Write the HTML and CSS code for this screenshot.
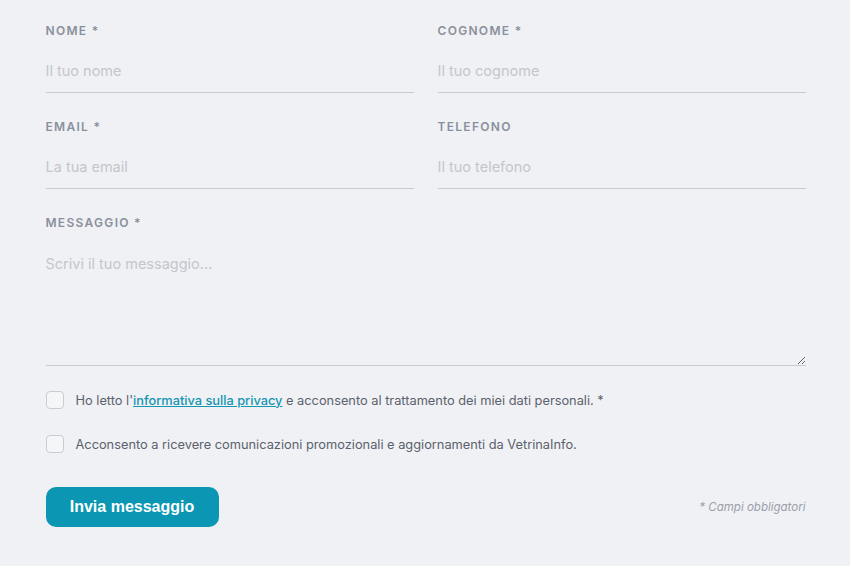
FILE: index.html
```html
<!DOCTYPE html>
<html lang="it">
<head>
  <meta charset="UTF-8" />
  <meta name="viewport" content="width=device-width, initial-scale=1.0" />
  <title>Contatti</title>
  <link rel="stylesheet" href="styles.css">
</head>
<body>
  <form class="contact-form">
    <div class="row">
      <div class="field">
        <label for="nome">Nome *</label>
        <input type="text" id="nome" placeholder="Il tuo nome">
      </div>
      <div class="field">
        <label for="cognome">Cognome *</label>
        <input type="text" id="cognome" placeholder="Il tuo cognome">
      </div>
    </div>

    <div class="row">
      <div class="field">
        <label for="email">Email *</label>
        <input type="email" id="email" placeholder="La tua email">
      </div>
      <div class="field">
        <label for="telefono">Telefono</label>
        <input type="tel" id="telefono" placeholder="Il tuo telefono">
      </div>
    </div>

    <div class="field">
      <label for="messaggio">Messaggio *</label>
      <textarea id="messaggio" placeholder="Scrivi il tuo messaggio..."></textarea>
    </div>

    <div class="checks">
      <label class="check">
        <input type="checkbox">
        <span class="box"></span>
        <span>Ho letto l'<a href="#">informativa sulla privacy</a> e acconsento al trattamento dei miei dati personali. *</span>
      </label>
      <label class="check">
        <input type="checkbox">
        <span class="box"></span>
        <span>Acconsento a ricevere comunicazioni promozionali e aggiornamenti da VetrinaInfo.</span>
      </label>
    </div>

    <div class="actions">
      <button type="submit" class="btn">Invia messaggio</button>
      <span class="note">* Campi obbligatori</span>
    </div>
  </form>
</body>
</html>
```

FILE: styles.css
```css
body {
  margin: 0;
  background: #f0f1f5;
  font-family: Inter, "Noto Sans", sans-serif;
}

.contact-form {
  width: 760px;
  margin: 0 auto;
  padding: 22px 0 0 1px;
}

.row {
  display: grid;
  grid-template-columns: 1fr 1fr;
  gap: 24px;
}

.field {
  margin-bottom: 25px;
}

.field label {
  display: block;
  font-size: 12px;
  line-height: 18px;
  font-weight: 600;
  letter-spacing: 1.3px;
  text-transform: uppercase;
  color: #8a909c;
  margin-bottom: 9px;
}

.field input,
.field textarea {
  display: block;
  width: 100%;
  box-sizing: border-box;
  background: transparent;
  border: none;
  border-bottom: 1px solid #c9ccd3;
  font-family: inherit;
  font-size: 14.5px;
  color: #444;
  outline: none;
}

.field input {
  height: 44px;
  padding: 0;
}

.field textarea {
  height: 125px;
  padding: 12px 0 0;
  line-height: 22px;
  resize: vertical;
}

.field input::placeholder,
.field textarea::placeholder {
  color: #c3c6cd;
}

.checks {
  display: flex;
  flex-direction: column;
  gap: 26px;
  margin-top: 25px;
}

.check {
  display: flex;
  align-items: center;
  gap: 12px;
  font-size: 12.8px;
  color: #5b616c;
  cursor: pointer;
}

.check input {
  display: none;
}

.check .box {
  width: 16px;
  height: 16px;
  border: 1px solid #c9ccd3;
  border-radius: 4px;
  background: #f5f6f8;
  flex-shrink: 0;
}

.check a {
  color: #1596b0;
  font-weight: 500;
}

.actions {
  display: flex;
  justify-content: space-between;
  align-items: center;
  margin-top: 34px;
}

.btn {
  background: #0b97b3;
  color: white;
  border: none;
  border-radius: 10px;
  width: 173px;
  height: 40px;
  font-family: "Liberation Sans", Arial, sans-serif;
  font-weight: bold;
  font-size: 16px;
  cursor: pointer;
}

.note {
  font-size: 11.5px;
  font-style: italic;
  color: #9aa0aa;
}
```
